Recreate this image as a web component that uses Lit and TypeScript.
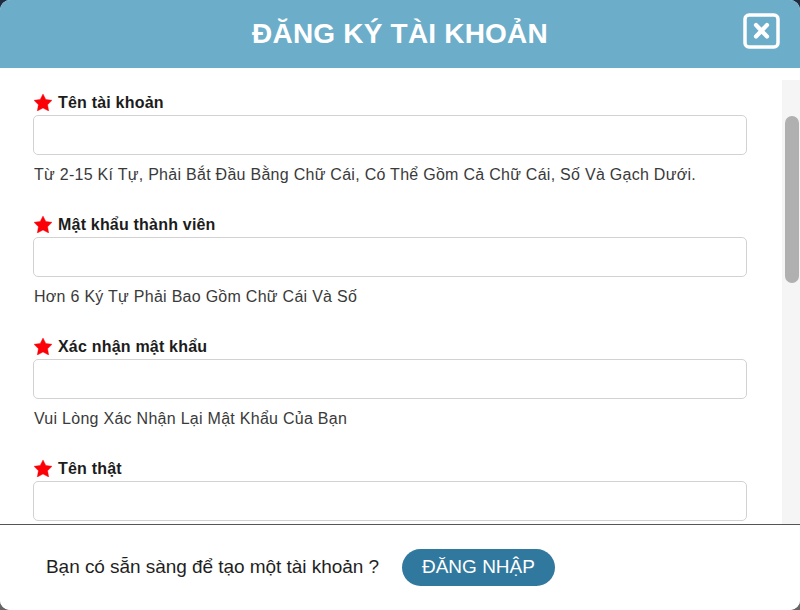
import { LitElement, html, css } from "lit";
import { customElement } from "lit/decorators.js";

const star = html`<svg class="star" viewBox="0 0 18 17" aria-hidden="true"><path d="M9 0 L11.8 5.4 L18 6.3 L13.6 10.7 L14.7 17 L9 14 L3.3 17 L4.4 10.7 L0 6.3 L6.2 5.4 Z" stroke="#fb0007" stroke-width="0.4" stroke-linejoin="round"/></svg>`;

const fields = [
  { label: "Tên tài khoản", hint: "Từ 2-15 Kí Tự, Phải Bắt Đầu Bằng Chữ Cái, Có Thể Gồm Cả Chữ Cái, Số Và Gạch Dưới." },
  { label: "Mật khẩu thành viên", hint: "Hơn 6 Ký Tự Phải Bao Gồm Chữ Cái Và Số" },
  { label: "Xác nhận mật khẩu", hint: "Vui Lòng Xác Nhận Lại Mật Khẩu Của Bạn" },
  { label: "Tên thật", hint: "" },
];

@customElement("app-root")
export class AppRoot extends LitElement {
  static styles = css`
    :host {
      display: block;
      width: 800px;
      height: 610px;
      background: linear-gradient(#1d2c40 0 50%, #666 50% 100%);
      font-family: "Liberation Sans", Arial, sans-serif;
      overflow: hidden;
    }
    .modal {
      width: 800px;
      height: 610px;
      background: #fff;
      border-radius: 10px;
      overflow: hidden;
      display: flex;
      flex-direction: column;
    }
    .head {
      flex: none;
      height: 68px;
      box-sizing: border-box;
      background: #6cadca;
      display: grid;
      grid-template-columns: 1fr auto 1fr;
      align-items: center;
    }
    h1 {
      grid-column: 2;
      margin: 0;
      color: #fff;
      font-size: 28px;
      font-weight: 700;
      letter-spacing: 0.2px;
    }
    .close {
      grid-column: 3;
      justify-self: end;
      width: 37px;
      height: 36px;
      margin: 0 20px 7px 0;
      display: block;
    }
    .body {
      flex: 1;
      min-height: 0;
      display: flex;
      overflow: hidden;
      padding-top: 12px;
    }
    .form {
      flex: 1;
      min-width: 0;
      padding: 11px 0 0 33px;
      overflow: hidden;
    }
    .field {
      width: 714px;
      height: 122px;
    }
    label {
      display: flex;
      align-items: center;
      gap: 6px;
      height: 23px;
      margin-bottom: 1px;
      padding-left: 1px;
      font-size: 16px;
      font-weight: 700;
      letter-spacing: 0.2px;
      color: #1c1c1c;
    }
    .star {
      width: 18px;
      height: 17px;
      fill: #fb0007;
      flex: none;
    }
    .input {
      height: 40px;
      box-sizing: border-box;
      border: 1.5px solid #d2d2d2;
      border-radius: 5px;
      background: #fff;
    }
    .hint {
      margin-top: 9px;
      padding-left: 1px;
      font-size: 16px;
      line-height: 21px;
      letter-spacing: 0.275px;
      color: #3a3a3a;
    }
    .track {
      flex: none;
      width: 18px;
      background: #f5f5f5;
      display: flex;
      padding: 36px 0 0 3px;
      box-sizing: border-box;
    }
    .thumb {
      width: 14px;
      height: 167px;
      border-radius: 7px;
      background: #b0b0b0;
    }
    .foot {
      flex: none;
      height: 86px;
      box-sizing: border-box;
      border-top: 1px solid #555;
      background: #fff;
      display: flex;
      align-items: center;
      gap: 23px;
      padding: 0 0 0 46px;
    }
    .ask {
      font-size: 19px;
      letter-spacing: -0.05px;
      color: #1f1f1f;
      margin-bottom: 2px;
    }
    .btn {
      border: 0;
      width: 153px;
      height: 37px;
      border-radius: 19px;
      background: #31789f;
      color: #fff;
      font: 19px "Liberation Sans", Arial, sans-serif;
      padding: 0 0 2px;
      box-sizing: border-box;
    }
  `;

  render() {
    return html`<div class="modal">
      <header class="head">
        <h1>ĐĂNG KÝ TÀI KHOẢN</h1>
        <svg class="close" viewBox="0 0 37 36" aria-label="Đóng">
          <rect x="2" y="2" width="33" height="32" rx="4" fill="none" stroke="#fff" stroke-width="3.5"/>
          <path d="M13 12 L24 23.5 M24 12 L13 23.5" stroke="#fff" stroke-width="4.2" stroke-linecap="round" fill="none"/>
        </svg>
      </header>
      <div class="body">
        <div class="form">
          ${fields.map(
            (f) => html`<div class="field">
              <label>${star}<span>${f.label}</span></label>
              <div class="input"></div>
              ${f.hint ? html`<div class="hint">${f.hint}</div>` : ""}
            </div>`
          )}
        </div>
        <div class="track"><div class="thumb"></div></div>
      </div>
      <footer class="foot">
        <span class="ask">Bạn có sẵn sàng để tạo một tài khoản ?</span>
        <button class="btn">ĐĂNG NHẬP</button>
      </footer>
    </div>`;
  }
}
